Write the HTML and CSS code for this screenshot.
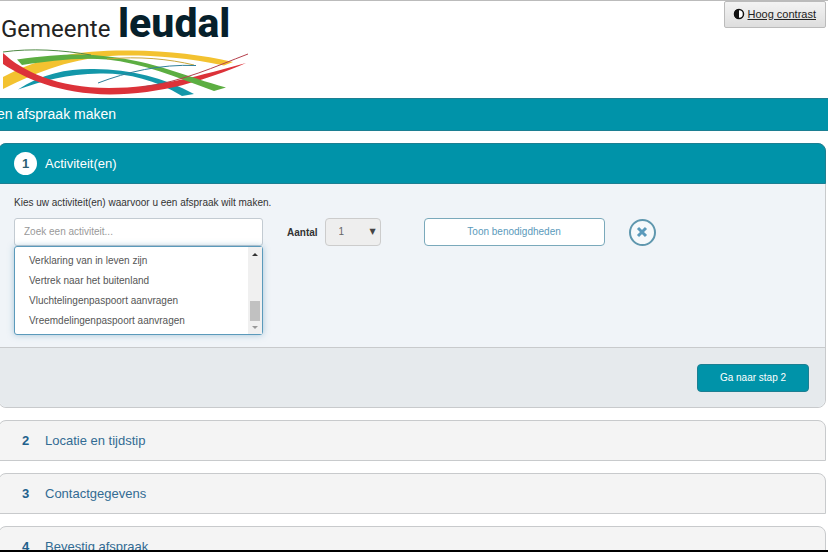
FILE: index.html
```html
<!DOCTYPE html>
<html lang="nl">
<head>
  <meta charset="UTF-8">
  <meta name="viewport" content="width=device-width, initial-scale=1.0">
  <title>Afspraak maken - Gemeente Leudal</title>
  <link rel="stylesheet" href="styles.css">
</head>
<body>
  <header class="header">
    <svg class="logo" width="252" height="97" viewBox="0 0 252 97" role="img" aria-label="Gemeente Leudal">
      <text class="logo-gemeente" x="1" y="36">Gemeente</text>
      <text class="logo-leudal" x="118" y="36">leudal</text>
      <path fill="#f3c230" d="M3 76C42 55 82 49 130 49.500C170 50 203 54 233 61L224 64.500C186 56 150 54 119 54.500C72 57 39 70 3 88Z"/>
      <path fill="#1397a9" d="M18 88.500C42 72 70 67.500 94 68C131 68 164 77 194 93L182 95C154 78 127 72 100 72.500C67 73 42 80 18 88.500Z"/>
      <path fill="#dc3239" d="M3 52C22 70 57 87 109 87C158 87 202 74 246 62C207 79 160 93.500 110 93.500C59 93 24 77 3 63Z"/>
      <path fill="#5cae42" d="M17 58.500C57 53 83 52 108 55.500C153 60 187 76 226 86.500L214 90C176 76 142 62 107 58.500C78 56 49 60 22 64Z"/>
      <path class="logo-line" stroke="#4f8a45" d="M3 51C31 47 63 49 91 54"/>
      <path class="logo-line" stroke="#c8a63a" d="M107 58C139 55 169 58 194 64"/>
      <path class="logo-line" stroke="#2f7f9a" d="M98 82C127 71 160 63 196 64.500"/>
      <path class="logo-line" stroke="#b5404c" d="M143 86C184 80 214 66 248 53"/>
    </svg>
    <button class="contrast-button" type="button">
      <svg width="12" height="12" viewBox="0 0 12 12" aria-hidden="true">
        <circle cx="6" cy="6" r="4.500" fill="#fff" stroke="#111" stroke-width="1.500"/>
        <path d="M6 1a5 5 0 0 0 0 10z" fill="#111"/>
      </svg>
      <span>Hoog contrast</span>
    </button>
  </header>

  <div class="title-bar">
    <h1>en afspraak maken</h1>
  </div>

  <main class="steps">
    <section class="step step-active">
      <h2 class="step-header"><span class="step-number">1</span>Activiteit(en)</h2>
      <div class="step-body">
        <label class="intro" for="activity">Kies uw activiteit(en) waarvoor u een afspraak wilt maken.</label>
        <div class="form-row">
          <div class="combo">
            <input type="text" id="activity" placeholder="Zoek een activiteit...">
            <div class="menu">
              <ul role="listbox" aria-label="Activiteiten">
                <li role="option">Verklaring van in leven zijn</li>
                <li role="option">Vertrek naar het buitenland</li>
                <li role="option">Vluchtelingenpaspoort aanvragen</li>
                <li role="option">Vreemdelingenpaspoort aanvragen</li>
              </ul>
              <div class="scrollbar">
                <span class="arrow-up"></span>
                <span class="thumb"></span>
                <span class="arrow-down"></span>
              </div>
            </div>
          </div>
          <label class="amount-label" for="amount">Aantal</label>
          <div class="amount">
            <select id="amount">
              <option>1</option>
            </select>
          </div>
          <button class="button-outline" type="button">Toon benodigdheden</button>
          <button class="remove-button" type="button" aria-label="Verwijderen">
            <svg width="12" height="12" viewBox="0 0 12 12">
              <path d="M2 2l8 8M10 2l-8 8" stroke="#5b9abb" stroke-width="3"/>
            </svg>
          </button>
        </div>
      </div>
      <div class="step-footer">
        <button class="button-primary" type="button">Ga naar stap 2</button>
      </div>
    </section>

    <section class="step">
      <h2 class="step-header"><span class="step-number">2</span>Locatie en tijdstip</h2>
    </section>
    <section class="step">
      <h2 class="step-header"><span class="step-number">3</span>Contactgegevens</h2>
    </section>
    <section class="step">
      <h2 class="step-header"><span class="step-number">4</span>Bevestig afspraak</h2>
    </section>
  </main>
</body>
</html>
```
FILE: styles.css
```css
:root {
  --teal: #0093a9;
  --teal-dark: #1c7f92;
  --link: #326b93;
  --blue: #5b9abb;
  --border: #c8cacc;
}

* {
  box-sizing: border-box;
}

body {
  margin: 0;
  height: 100vh;
  overflow: hidden;
  border-top: 1px solid #bbb;
  border-bottom: 2px solid #000;
  background-color: #fff;
  color: #333;
  font-family: "Liberation Sans", Arial, sans-serif;
  font-size: 10px;
}

h1,
h2 {
  margin: 0;
  font-weight: normal;
}

button,
input,
select {
  font-family: inherit;
  font-size: 10px;
}

.header {
  display: flex;
  justify-content: space-between;
  align-items: flex-start;
  padding-right: 2px;
}

.logo {
  display: block;
}

.logo-gemeente {
  font-family: Roboto, sans-serif;
  font-size: 24px;
  font-weight: 400;
  fill: #222;
}

.logo-leudal {
  font-family: Roboto, sans-serif;
  font-size: 41px;
  font-weight: 800;
  fill: #06202b;
}

.logo-line {
  fill: none;
  stroke-width: 1;
}

.contrast-button {
  display: flex;
  align-items: center;
  gap: 3px;
  height: 27px;
  padding: 0 9px 2px 8px;
  border: 1px solid #bbb;
  border-radius: 2px;
  background: linear-gradient(#f3f3f3, #dedede);
  color: #222;
  font-size: 11px;
  text-decoration: underline;
}

.title-bar {
  height: 33px;
  overflow: hidden;
  border-top: 1px solid var(--teal-dark);
  border-bottom: 1px solid var(--teal-dark);
  background-color: var(--teal);
  color: #fff;
}

.title-bar h1 {
  margin-left: -3px;
  font-size: 14px;
  line-height: 30px;
}

.steps {
  display: flex;
  flex-direction: column;
  gap: 12px;
  margin: 12px 2px 0 -2px;
}

.step {
  border: 1px solid var(--border);
  border-radius: 8px 8px 0 0;
  background-color: #f4f4f4;
}

.step-header {
  display: flex;
  align-items: center;
  gap: 8px;
  height: 39px;
  padding-left: 15px;
  color: var(--link);
  font-size: 13px;
}

.step-number {
  width: 23px;
  line-height: 23px;
  border-radius: 50%;
  color: #22618c;
  font-weight: bold;
  text-align: center;
}

.step-active {
  border-radius: 8px;
  background-color: #f0f4f8;
}

.step-active .step-header {
  height: 41px;
  margin: -1px -1px 0;
  border: 1px solid var(--teal-dark);
  border-radius: 8px 8px 0 0;
  background-color: var(--teal);
  color: #fff;
}

.step-active .step-number {
  background-color: #fff;
  color: #2c5f72;
}

.step-body {
  height: 163px;
  padding: 12px 15px 0;
}

.intro {
  display: block;
  line-height: 14px;
}

.form-row {
  display: flex;
  align-items: center;
  margin-top: 8px;
}

.combo {
  position: relative;
  width: 249px;
}

.combo input {
  display: block;
  width: 100%;
  height: 28px;
  padding: 0 9px 1px;
  border: 1px solid #c3cbd2;
  border-radius: 3px;
  background-color: #fff;
}

.combo input::placeholder {
  color: #999;
}

.menu {
  position: absolute;
  top: 100%;
  left: 0;
  display: flex;
  width: 100%;
  border: 1px solid var(--blue);
  border-radius: 3px;
  background-color: #fff;
  box-shadow: 0 0 6px rgba(91, 154, 187, 0.5);
}

.menu ul {
  flex: 1;
  margin: 0;
  padding: 4px 0 3px 14px;
  list-style: none;
}

.menu li {
  line-height: 20px;
  color: #555;
}

.scrollbar {
  display: flex;
  flex-direction: column;
  align-items: center;
  width: 14px;
  padding: 6px 0 5px;
  background-color: #f0f0f0;
}

.arrow-up,
.arrow-down {
  border: 3px solid transparent;
}

.arrow-up {
  border-top: 0;
  border-bottom-color: #333;
}

.arrow-down {
  border-bottom: 0;
  border-top-color: #999;
}

.thumb {
  width: 10px;
  height: 20px;
  margin: auto 0 5px;
  background-color: #c1c1c1;
}

.amount-label {
  margin: 0 7px 0 24px;
  font-weight: bold;
}

.amount {
  position: relative;
  width: 56px;
}

.amount::after {
  content: "▼";
  position: absolute;
  top: 9px;
  right: 5px;
  color: #444;
  font-family: "DejaVu Sans", sans-serif;
  font-size: 8px;
  pointer-events: none;
}

.amount select {
  display: block;
  width: 100%;
  height: 28px;
  padding: 0 13px 1px;
  border: 1px solid #ccc;
  border-radius: 4px;
  background-color: #eee;
  color: #666;
  appearance: none;
}

.button-outline {
  width: 181px;
  height: 28px;
  margin-left: 43px;
  padding: 0 6px 2px;
  border: 1px solid #7aa9bb;
  border-radius: 4px;
  background-color: #fff;
  color: var(--blue);
}

.remove-button {
  display: flex;
  align-items: center;
  justify-content: center;
  width: 27px;
  height: 27px;
  margin-left: 24px;
  padding: 0;
  border: 2px solid #5f97ae;
  border-radius: 50%;
  background-color: #f6f9fb;
}

.step-footer {
  display: flex;
  justify-content: flex-end;
  padding: 16px 16px 15px;
  border-top: 1px solid var(--border);
  border-radius: 0 0 8px 8px;
  background-color: #e6eaed;
}

.button-primary {
  width: 112px;
  height: 28px;
  padding: 0 6px 2px;
  border: 1px solid var(--teal-dark);
  border-radius: 4px;
  background-color: var(--teal);
  color: #fff;
}
```
